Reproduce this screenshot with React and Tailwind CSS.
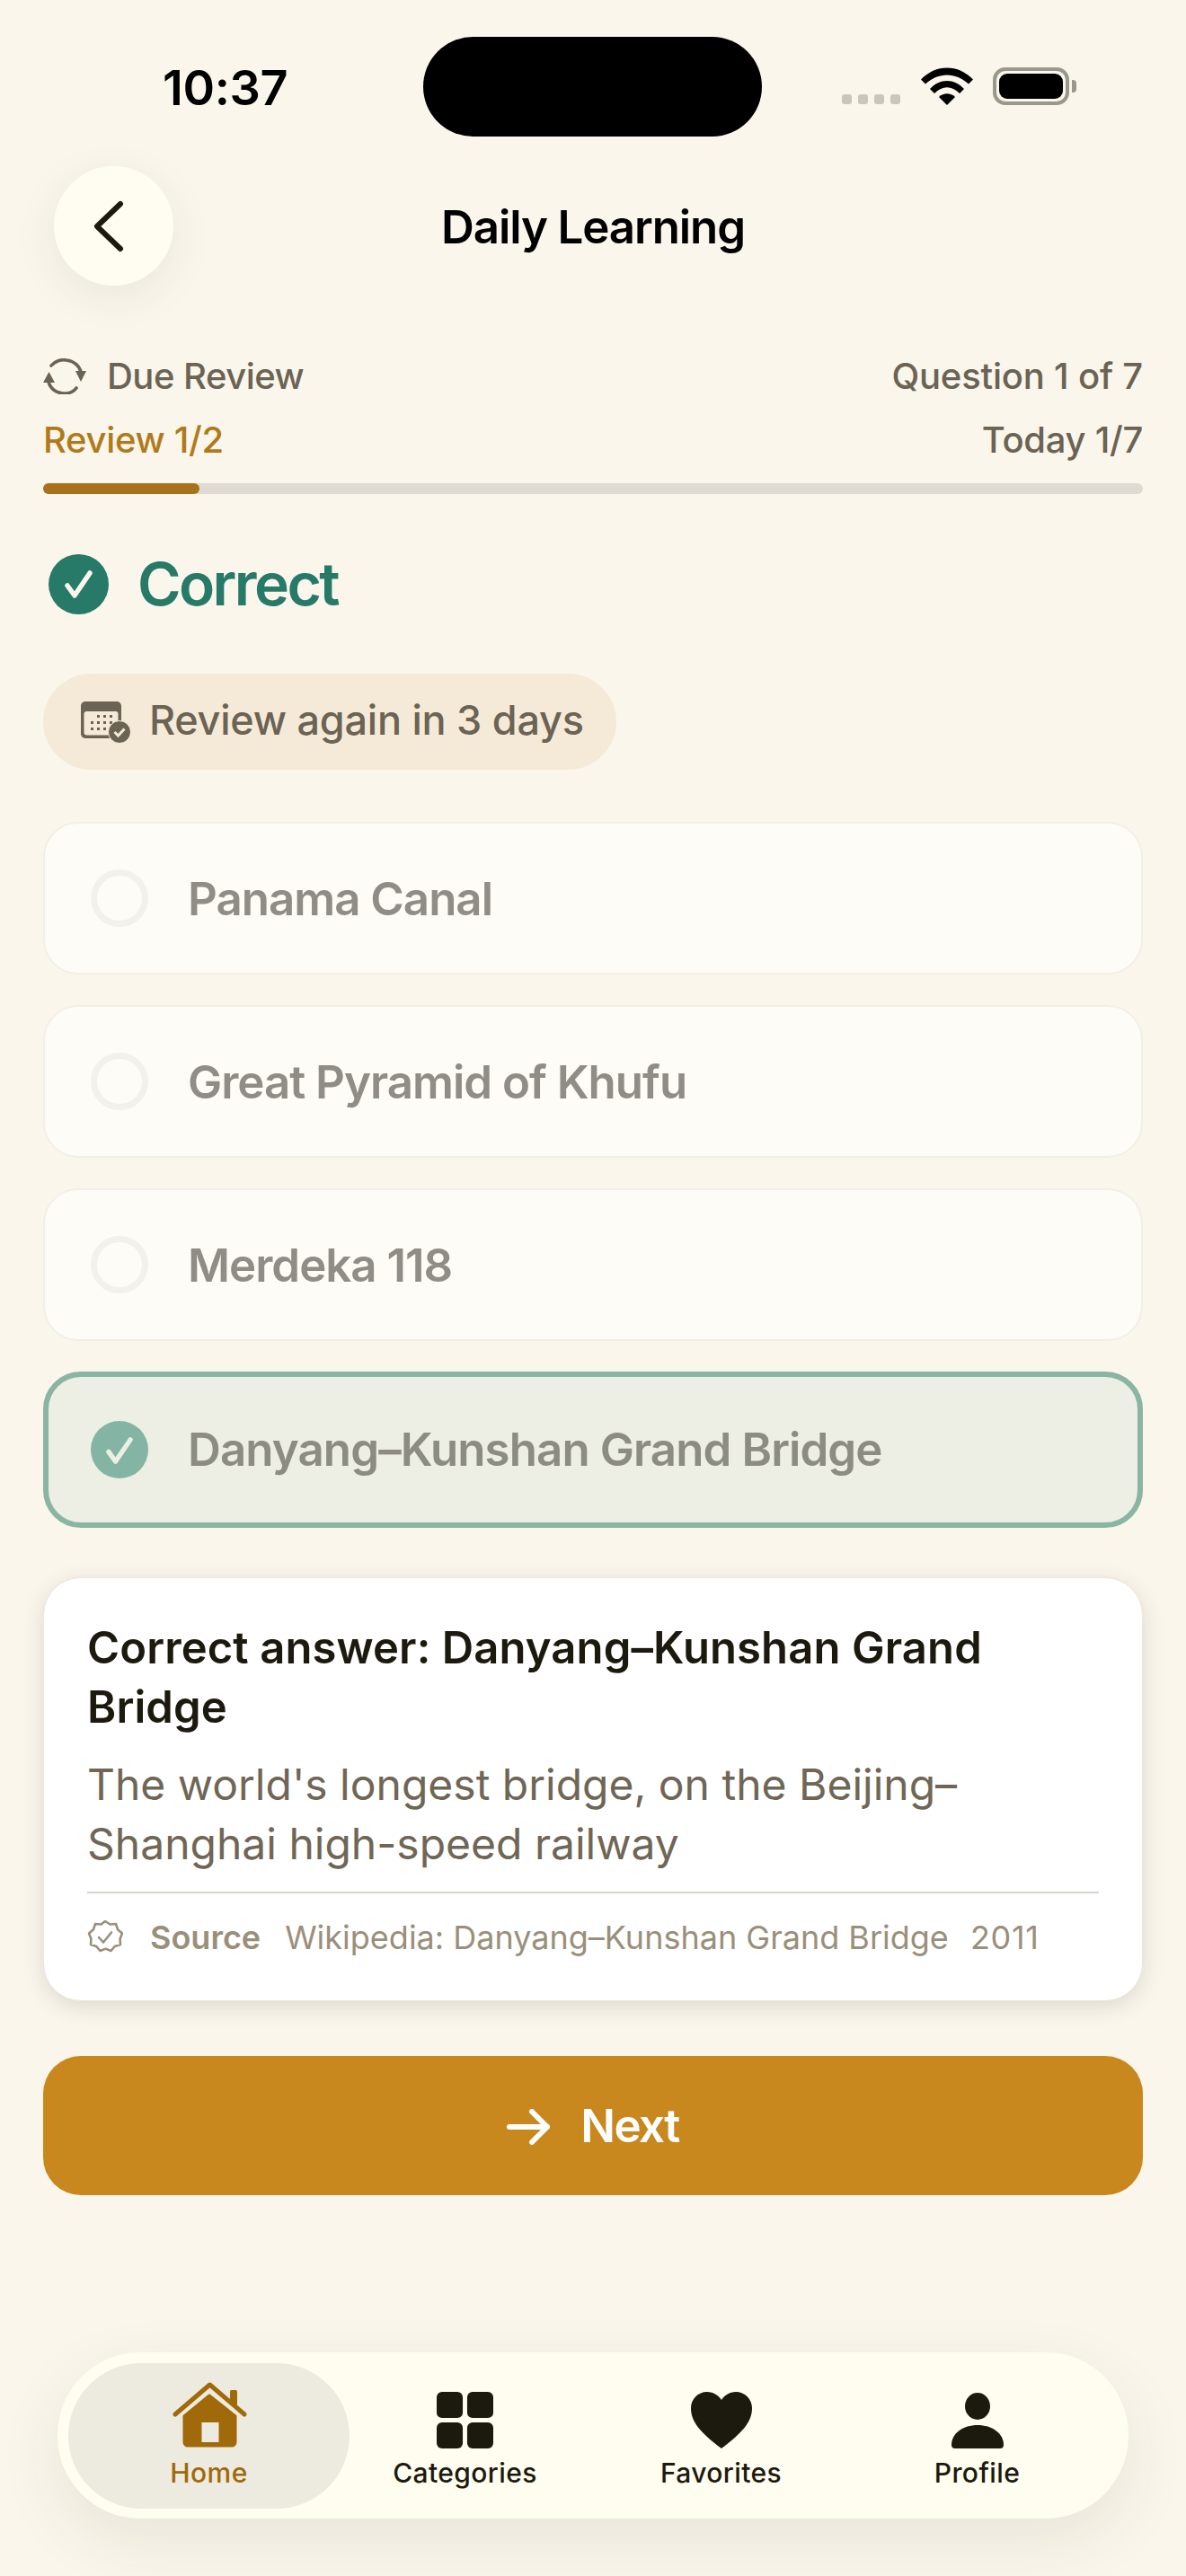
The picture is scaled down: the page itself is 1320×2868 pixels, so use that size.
import React from 'react';

const options = ['Panama Canal', 'Great Pyramid of Khufu', 'Merdeka 118'];

function RefreshIcon() {
  return (
    <svg viewBox="0 0 48 40" className="w-[48px] h-[40px] shrink-0" fill="none" stroke="#6B6354" strokeWidth="3.6" strokeLinecap="round">
      <path d="M9 8C13 3 20 1 26 2c8 1 14 6 16 13" />
      <path d="M6 26c2 8 9 13 18 13 5 0 10-2 13-6" />
      <path d="M36 14h12l-6 12z" fill="#6B6354" stroke="none" />
      <path d="M0 27h13L6.500 15z" fill="#6B6354" stroke="none" />
    </svg>
  );
}

function CalendarIcon() {
  return (
    <svg viewBox="0 0 55 46" className="w-[55px] h-[46px] shrink-0">
      <rect x="0" y="0" width="45" height="41" rx="5" fill="#6B6354" />
      <rect x="3.500" y="11" width="38" height="26.500" rx="3" fill="#F5EAD8" />
      <g fill="#6B6354">
        <rect x="18" y="15" width="3" height="3" /><rect x="25" y="15" width="3" height="3" /><rect x="32" y="15" width="3" height="3" />
        <rect x="11" y="22" width="3" height="3" /><rect x="18" y="22" width="3" height="3" /><rect x="25" y="22" width="3" height="3" /><rect x="32" y="22" width="3" height="3" />
        <rect x="11" y="29" width="3" height="3" /><rect x="18" y="29" width="3" height="3" /><rect x="25" y="29" width="3" height="3" />
      </g>
      <circle cx="43" cy="34" r="12.500" fill="#6B6354" stroke="#F5EAD8" strokeWidth="1" />
      <path d="M37.500 34l4 4 7-7.500" fill="none" stroke="#F5EAD8" strokeWidth="3" />
    </svg>
  );
}

function SourceIcon() {
  return (
    <svg viewBox="0 0 40 40" className="w-[40px] h-[40px] shrink-0" fill="none" stroke="#9A8F7A" strokeWidth="2.600" strokeLinejoin="round" strokeLinecap="round">
      <path d="M20 2l5.500 3.500 6.500-.5 2 6.200 5 4.300-2.400 6 .4 6.500-6.300 2-4.200 5-6-2.400-6 2.400-4.200-5-6.300-2 .4-6.500L2 15.500l5-4.300L9 5l6.500.5z" />
      <path d="M13 20l5 5.500 9-11" />
    </svg>
  );
}

function CheckMark({ className, color }) {
  return (
    <svg viewBox="0 0 33 32" className={className} fill="none" stroke={color} strokeWidth="5.500" strokeLinecap="round" strokeLinejoin="round">
      <path d="M4 18l8 11L29 4" />
    </svg>
  );
}

function NavIcon({ name }) {
  if (name === 'Home') {
    return (
      <svg viewBox="0 0 84 74" className="h-[74px] w-[84px]" fill="#A0690A">
        <path d="M14 38L42 15l29 23v29a4 4 0 0 1-4 4H18a4 4 0 0 1-4-4z" stroke="#A0690A" strokeWidth="3" strokeLinejoin="round" />
        <path d="M4 36L42.500 3 81 36" fill="none" stroke="#EDEBDF" strokeWidth="10" strokeLinecap="round" strokeLinejoin="round" />
        <rect x="65" y="9" width="8" height="17" rx="1.500" />
        <path d="M4 36L42.500 3 81 36" fill="none" stroke="#A0690A" strokeWidth="5" strokeLinecap="round" strokeLinejoin="round" />
        <rect x="33.500" y="45" width="19" height="22" fill="#EDEBDF" />
      </svg>
    );
  }
  if (name === 'Categories') {
    return (
      <svg viewBox="0 0 64 64" className="h-[63px] w-[63px]" fill="#1C1A0E">
        <rect x="0" y="0" width="29.500" height="29.500" rx="6" /><rect x="34.500" y="0" width="29.500" height="29.500" rx="6" />
        <rect x="0" y="34.500" width="29.500" height="29.500" rx="6" /><rect x="34.500" y="34.500" width="29.500" height="29.500" rx="6" />
      </svg>
    );
  }
  if (name === 'Favorites') {
    return (
      <svg viewBox="0 0 68 63" className="h-[63px] w-[68px]" fill="#1C1A0E">
        <path d="M34 63C10 45 0 33 0 18 0 8 8 0 18 0c7 0 13 4 16 9 3-5 9-9 16-9 10 0 18 8 18 18 0 15-10 27-34 45z" />
      </svg>
    );
  }
  return (
    <svg viewBox="0 0 58 62" className="h-[62px] w-[58px]" fill="#1C1A0E">
      <ellipse cx="29" cy="15" rx="14" ry="15" />
      <path d="M0 58C0 45 13 36 29 36s29 9 29 22q0 4-4 4H4q-4 0-4-4z" />
    </svg>
  );
}

export default function App() {
  return (
    <div className="w-[1320px] h-[2868px] bg-[#FAF6EC] overflow-hidden flex flex-col" style={{ fontFamily: 'Inter, sans-serif' }}>
      {/* status bar */}
      <div className="relative h-[185px] shrink-0">
        <span className="absolute left-[181px] top-[73px] text-[54px] leading-[50px] font-semibold text-black tracking-[-0.4px]">10:37</span>
        <div className="absolute left-[471px] top-[41px] w-[377px] h-[111px] rounded-full bg-black"></div>
        <div className="absolute left-[937px] top-[105px] flex gap-[7px]">
          <span className="w-[11px] h-[11px] rounded-[3px] bg-[#C9C6BA]"></span>
          <span className="w-[11px] h-[11px] rounded-[3px] bg-[#C9C6BA]"></span>
          <span className="w-[11px] h-[11px] rounded-[3px] bg-[#C9C6BA]"></span>
          <span className="w-[11px] h-[11px] rounded-[3px] bg-[#C9C6BA]"></span>
        </div>
        <svg viewBox="0 0 58 42" className="absolute left-[1025px] top-[75px] w-[58px] h-[42px]">
          <path d="M0 13.500C16 -4 42 -4 58 13.500l-5 5C39 5 19 5 5 18.500z" />
          <path d="M10 24C21 12 37 12 48 24l-5 5C34 20 24 20 15 29z" />
          <path d="M20 33c5-5 13-5 18 0l-9 9z" />
        </svg>
        <div className="absolute left-[1105px] top-[75px] w-[85px] h-[42px] rounded-[14px] border-[4px] border-[#9A978B] p-[3px]">
          <div className="w-full h-full rounded-[9px] bg-black"></div>
        </div>
        <div className="absolute left-[1193px] top-[89px] w-[5px] h-[14px] rounded-r-[4px] bg-[#9A978B]"></div>
      </div>

      {/* header */}
      <div className="relative h-[133px] shrink-0 flex items-center justify-center">
        <button className="absolute left-[60px] top-0 w-[133px] h-[133px] rounded-full bg-[#FFFDF2] flex items-center justify-center shadow-[0_12px_48px_rgba(60,50,20,0.08)]">
          <svg viewBox="0 0 36 58" className="w-[36px] h-[58px] -translate-x-[6px]" fill="none" stroke="#1C1A0E" strokeWidth="6" strokeLinecap="round" strokeLinejoin="round">
            <path d="M31 4L5 29l26 25" />
          </svg>
        </button>
        <h1 className="mt-[2px] text-[51px] leading-[60px] font-semibold text-black tracking-[-1.1px]">Daily Learning</h1>
      </div>

      <div className="px-[48px] flex flex-col">
        {/* progress */}
        <div className="mt-[76px] flex items-center justify-between h-[50px]">
          <div className="flex items-center gap-[23px] text-[40px] font-medium text-[#6B6354] tracking-[-0.5px]">
            <RefreshIcon />
            <span>Due Review</span>
          </div>
          <span className="text-[40px] font-medium text-[#6B6354] tracking-[-0.2px]">Question 1 of 7</span>
        </div>
        <div className="mt-[21px] flex items-center justify-between h-[50px] text-[40px] font-medium tracking-[-0.3px]">
          <span className="text-[#B07A1A]">Review 1/2</span>
          <span className="text-[#6B6354]">Today 1/7</span>
        </div>
        <div className="mt-[23px] h-[12px] rounded-full bg-[#DFDBD3]">
          <div className="h-full w-[174px] rounded-full bg-[#A9711A]"></div>
        </div>

        {/* result */}
        <div className="mt-[60px] ml-[6px] flex items-center gap-[32px]">
          <span className="w-[67px] h-[67px] rounded-full bg-[#287A68] flex items-center justify-center">
            <CheckMark className="w-[33px] h-[32px]" color="#FAF6EC" />
          </span>
          <span className="text-[66px] leading-[80px] font-semibold text-[#287A68] tracking-[-2.600px]">Correct</span>
        </div>

        <div className="mt-[60px] self-start h-[107px] rounded-full bg-[#F5EAD8] pl-[42px] pr-[36px] flex items-center gap-[21px]">
          <CalendarIcon />
          <span className="-mt-[3px] text-[45px] font-medium text-[#6B6354] tracking-[-0.25px]">Review again in 3 days</span>
        </div>

        {/* options */}
        <div className="mt-[58px] flex flex-col gap-[34px]">
          {options.map((opt) => (
            <div key={opt} className="h-[170px] rounded-[39px] bg-[#FDFCF7] border-[2px] border-[#F3EFE6] pl-[51px] flex items-center gap-[44px]">
              <span className="w-[64px] h-[64px] rounded-full border-[7px] border-[#F3F1EC] shrink-0"></span>
              <span className="mt-[3px] text-[51px] font-semibold text-[#8F8D85] tracking-[-1px]">{opt}</span>
            </div>
          ))}
          <div className="h-[174px] rounded-[42px] bg-[#EDEEE4] border-[6px] border-[#8AB5A3] pl-[47px] flex items-center gap-[44px]">
            <span className="w-[64px] h-[64px] rounded-full bg-[#84B5A4] flex items-center justify-center shrink-0">
              <CheckMark className="w-[32px] h-[31px]" color="#EDEEE4" />
            </span>
            <span className="text-[51px] font-semibold text-[#8D8C82] tracking-[-0.9px]">Danyang–Kunshan Grand Bridge</span>
          </div>
        </div>

        {/* explanation */}
        <div className="mt-[55px] h-[472px] rounded-[42px] bg-white px-[48px] pt-[45px] shadow-[0_6px_24px_rgba(60,50,20,0.14)] border border-[#EAE6DC]">
          <p className="text-[49px] leading-[66px] font-semibold text-[#1C1A0E] tracking-[0.1px]">Correct answer: Danyang–Kunshan Grand Bridge</p>
          <p className="mt-[20px] text-[48px] leading-[66px] text-[#6F6655]">The world's longest bridge, on the Beijing–Shanghai high-speed railway</p>
          <div className="mt-[20px] border-t-[2px] border-[#D8D5CE] pt-[22px] flex items-center text-[36px] text-[#9A8F7A]">
            <SourceIcon />
            <span className="ml-[30px] font-semibold">Source</span>
            <span className="ml-[27px]">Wikipedia: Danyang–Kunshan Grand Bridge</span>
            <span className="ml-[24px] tracking-[0.7px]">2011</span>
          </div>
        </div>

        {/* next */}
        <button className="mt-[61px] h-[155px] rounded-[42px] bg-[#C8881E] flex items-center justify-center gap-[34px] text-white">
          <svg viewBox="0 0 48 40" className="w-[48px] h-[40px] mt-[2px]" fill="none" stroke="#FFFFFF" strokeWidth="6" strokeLinecap="round" strokeLinejoin="round">
            <path d="M3 20h42M28 3l17 17-17 17" />
          </svg>
          <span className="mt-[2px] text-[51px] font-semibold tracking-[-1.500px]">Next</span>
        </button>
      </div>

      {/* tab bar */}
      <nav className="mt-[175px] mx-[64px] h-[185px] rounded-[92px] bg-[#FFFDF0] px-[26px] grid grid-cols-4 items-center shadow-[0_24px_72px_rgba(60,50,20,0.09)]">
        {['Home', 'Categories', 'Favorites', 'Profile'].map((name) => {
          const active = name === 'Home';
          return (
            <div key={name} className={`h-[162px] flex flex-col items-center justify-center gap-[9px] ${active ? '-mx-[14px] rounded-[81px] bg-[#EDEBDF]' : ''}`}>
              <div className="h-[74px] flex items-end justify-center"><NavIcon name={name} /></div>
              <span className={`text-[30px] leading-[36px] font-medium tracking-[0.4px] ${active ? 'text-[#A0690A]' : 'text-[#1C1A0E]'}`}>{name}</span>
            </div>
          );
        })}
      </nav>
    </div>
  );
}
